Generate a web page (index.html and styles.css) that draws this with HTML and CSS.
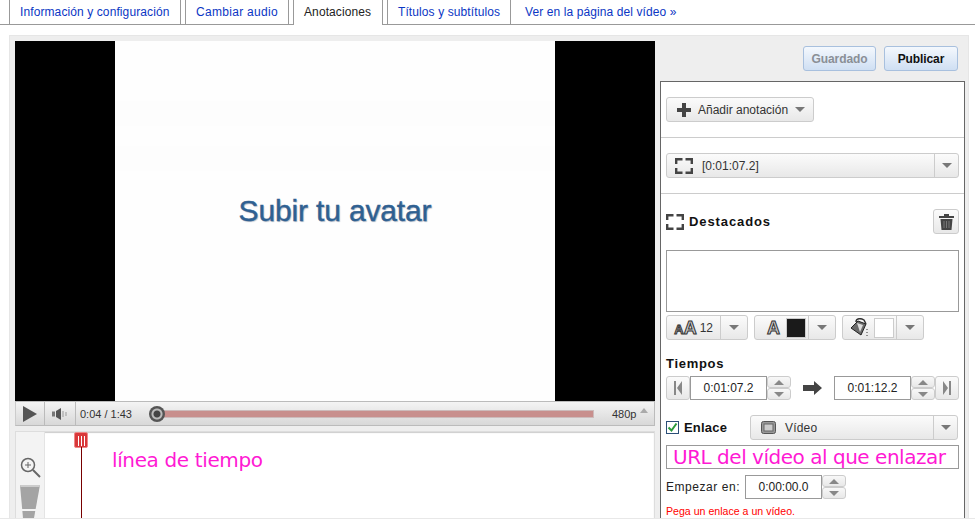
FILE: index.html
```html
<!DOCTYPE html>
<html lang="es">
<head>
<meta charset="utf-8">
<title>Anotaciones</title>
<link rel="stylesheet" href="styles.css">
</head>
<body>
<nav class="tabs">
  <a class="tab">Información y configuración</a>
  <a class="tab">Cambiar audio</a>
  <a class="tab active">Anotaciones</a>
  <a class="tab">Títulos y subtítulos</a>
  <a class="tab tab-link">Ver en la página del vídeo »</a>
</nav>
<main class="main">
  <section class="left">
    <div class="video">
      <div class="bar-black"></div>
      <div class="slide"><span class="slide-title">Subir tu avatar</span></div>
      <div class="bar-black"></div>
    </div>
    <div class="controls">
      <div class="ctl ctl-play"><svg width="14" height="16" viewBox="0 0 14 16"><path d="M0 0L14 8L0 16Z" fill="#555"/></svg></div>
      <div class="ctl ctl-vol"><svg width="16" height="12" viewBox="0 0 16 12"><path d="M0 3.5H3V8.500H0Z" fill="#777"/><path d="M4 3L9 0V12L4 9Z" fill="#555"/><path d="M11 3V9M14 4V8" stroke="#999" fill="none"/></svg></div>
      <span class="time">0:04 / 1:43</span>
      <div class="track">
        <div class="fill"></div>
        <div class="knob"></div>
      </div>
      <span class="quality">480p</span>
      <span class="q-up"></span>
    </div>
    <div class="timeline">
      <div class="zoomcol">
        <svg class="zoomicon" width="21" height="21" viewBox="0 0 21 21"><circle cx="8" cy="8" r="6.500" fill="none" stroke="#666" stroke-width="1.500"/><path d="M5 8H11M8 5V11" stroke="#666"/><path d="M13 13L20 20" stroke="#666" stroke-width="2"/></svg>
        <svg class="zoomslider" width="20" height="33" viewBox="0 0 20 33"><path d="M0 0H20L14 33H3Z" fill="#a4a4a4"/><path d="M0 0H20L19.700 2H.4Z" fill="#ccc"/><path d="M0 24H20V26H0Z" fill="#f3f3f3"/></svg>
      </div>
      <div class="tracks">
        <div class="playhead"><span class="grip"></span></div>
        <div class="playline"></div>
        <span class="tl-note">línea de tiempo</span>
      </div>
    </div>
  </section>
  <section class="right">
    <div class="actions">
      <button class="act act-off">Guardado</button>
      <button class="act">Publicar</button>
    </div>
    <div class="panel">
      <div class="sec">
        <div class="btn add">
          <svg width="14" height="14" viewBox="0 0 14 14"><path d="M5 0H9V5H14V9H9V14H5V9H0V5H5Z" fill="#444"/></svg>
          <span>Añadir anotación</span>
          <i class="caret"></i>
        </div>
      </div>
      <div class="sec">
        <div class="btn sel">
          <span class="sel-main sel-time">
            <svg class="brk" width="18" height="16" viewBox="0 0 18 16"><path d="M1.200 6V1.200H7.500M10.500 1.200H16.800V6M1.200 10V14.800H7.500M10.500 14.800H16.800V10" fill="none" stroke="#444" stroke-width="2.400"/></svg>
            <span>[0:01:07.2]</span>
          </span>
          <span class="sel-arrow"><i class="caret"></i></span>
        </div>
      </div>
      <div class="sec sec-last">
        <div class="head">
          <svg width="18" height="16" viewBox="0 0 18 16"><path d="M1.200 6V1.200H7.500M10.500 1.200H16.800V6M1.200 10V14.800H7.500M10.500 14.800H16.800V10" fill="none" stroke="#444" stroke-width="2.400"/></svg>
          <strong class="head-title">Destacados</strong>
          <div class="btn trash"><svg width="15" height="16" viewBox="0 0 15 16"><path d="M5 0H10V2H15V4H0V2H5Z" fill="#444"/><path d="M1.500 5H13.500L12.500 16H2.500Z" fill="#444"/><path d="M5 7V14M7.500 7V14M10 7V14" stroke="#777"/></svg></div>
        </div>
        <div class="textbox"></div>
        <div class="tools">
          <div class="btn tool tool-size">
            <span class="tool-main"><span class="gl gl-small">A</span><span class="gl">A</span><span class="num">12</span></span>
            <span class="tool-arrow"><i class="caret"></i></span>
          </div>
          <div class="btn tool tool-color">
            <span class="tool-main"><span class="gl">A</span><span class="swatch swatch-dark"></span></span>
            <span class="tool-arrow"><i class="caret"></i></span>
          </div>
          <div class="btn tool">
            <span class="tool-main"><svg width="18" height="19" viewBox="0 0 18 19"><path d="M7 3L15 6L10 17L0 10Z" fill="#6a6a6a" stroke="#222"/><path d="M6 5L12 7L9 14Z" fill="#ddd"/><path d="M5 4C5 0 10 0 13 2L15 6" fill="none" stroke="#333" stroke-width="1.500"/><path d="M16 11V12M16 14V15M16 17V18" stroke="#333"/></svg><span class="swatch swatch-light"></span></span>
            <span class="tool-arrow"><i class="caret"></i></span>
          </div>
        </div>
        <strong class="label">Tiempos</strong>
        <div class="times">
          <div class="btn step"><svg width="8" height="14" viewBox="0 0 8 14"><path d="M0 0H2V14H0ZM8 0V14L3 7Z" fill="#888"/></svg></div>
          <div class="timefield">0:01:07.2</div>
          <div class="spin"><span class="spin-b"><i class="up"></i></span><span class="spin-b"><i class="down"></i></span></div>
          <svg class="arrow" width="19" height="14" viewBox="0 0 19 14"><path d="M0 4H11V0L19 7L11 14V10H0Z" fill="#444"/></svg>
          <div class="timefield">0:01:12.2</div>
          <div class="spin"><span class="spin-b"><i class="up"></i></span><span class="spin-b"><i class="down"></i></span></div>
          <div class="btn step"><svg width="8" height="14" viewBox="0 0 8 14"><path d="M0 0V14L5 7ZM6 0H8V14H6Z" fill="#888"/></svg></div>
        </div>
        <div class="linkrow">
          <span class="check"><svg width="11" height="11" viewBox="0 0 11 11"><path d="M1.500 5.500L4.500 8.500L9.500 1.500" fill="none" stroke="#2a9a3a" stroke-width="2"/></svg></span>
          <strong class="link-label">Enlace</strong>
          <div class="btn sel link-sel">
            <span class="sel-main sel-video">
              <svg width="15" height="13" viewBox="0 0 15 13"><rect x=".5" y=".5" width="14" height="12" rx="2" fill="#999" stroke="#555"/><rect x="3" y="3" width="9" height="7" fill="#ccc" stroke="#666"/></svg>
              <span class="video-word">Vídeo</span>
            </span>
            <span class="sel-arrow"><i class="caret"></i></span>
          </div>
        </div>
        <div class="urlbox">URL del vídeo al que enlazar</div>
        <div class="startrow">
          <span class="start-label">Empezar en:</span>
          <div class="timefield">0:00:00.0</div>
          <div class="spin"><span class="spin-b"><i class="up"></i></span><span class="spin-b"><i class="down"></i></span></div>
        </div>
        <p class="error">Pega un enlace a un vídeo.</p>
      </div>
    </div>
  </section>
</main>
<div class="pageline"></div>
</body>
</html>
```

FILE: styles.css
```css
* { box-sizing: border-box; }
html, body { margin: 0; height: 519px; overflow: hidden; background: #fff; }
body { position: relative; font: 12px "Liberation Sans", Arial, sans-serif; color: #222; }

/* tabs */
.tabs { display: flex; gap: 4px; height: 25px; padding-left: 9px; border-bottom: 1px solid #999; }
.tab { height: 25px; padding: 5px 10px 0; border: 1px solid #999; border-top: 0; color: #0b36c4; white-space: nowrap; letter-spacing: .1px; }
.tab.active { color: #222; background: #fff; border-bottom: 0; }
.tab:nth-child(1) { width: 172px; }
.tab:nth-child(2) { width: 104px; letter-spacing: .3px; }
.tab:nth-child(3) { width: 90px; }
.tab:nth-child(4) { width: 124px; }
.tab-link { border: 0; padding-left: 10px; }

/* layout */
.main { display: flex; gap: 5px; width: 960px; height: 490px; margin: 10px 0 0 9px; padding: 5px 3px 0 5px; background: #eee; border: 1px solid #e6e6e6; border-bottom: 0; }
.left { width: 640px; flex: none; }
.right { width: 305px; flex: none; }

/* video */
.video { display: flex; height: 360px; background: #000; }
.bar-black { width: 100px; background: #000; }
.slide { flex: 1; display: flex; align-items: center; justify-content: center; padding: 0 0 20px 0; background: linear-gradient(#fefefe 0 60px, #fdfdfd 60px 85px, #fefefe 85px 105px, #fdfdfd 105px 130px, #fefefe 130px); }
.slide-title { font-size: 30px; letter-spacing: -.15px; color: #2f6091; -webkit-text-stroke: .4px #2f6091; text-shadow: 1px 1px 1px #b4bcc8; }

/* player bar */
.controls { display: flex; align-items: center; height: 25px; background: linear-gradient(#f4f4f4, #d8d8d8); border: 1px solid #bbb; border-left-color: #ccc; }
.ctl { display: flex; align-items: center; justify-content: center; height: 100%; border-right: 1px solid #bbb; }
.ctl-play { width: 29px; }
.ctl-vol { width: 31px; }
.time { width: 74px; padding-left: 4px; color: #333; font-size: 11px; white-space: nowrap; }
.track { position: relative; width: 444px; height: 8px; background: #c88f8d; border: 1px solid #cbb; }
.knob { position: absolute; left: -2px; top: -5px; width: 16px; height: 16px; border-radius: 50%; background: radial-gradient(#444 0 3px, #bbb 4px 5px, #555 6px 8px); }
.quality { margin-left: 18px; color: #333; font-size: 11px; }
.q-up { margin-left: 4px; margin-bottom: 6px; border: 4px solid transparent; border-top: 0; border-bottom: 5px solid #aaa; }

/* timeline */
.timeline { display: flex; height: 92px; margin-top: 5px; background: #fff; border: 1px solid #ddd; box-shadow: inset 0 1px 1px #ccc; }
.zoomcol { display: flex; flex-direction: column; align-items: center; gap: 7px; width: 29px; padding: 25px 0 0 0; background: #f3f3f3; border-right: 1px solid #e4e4e4; overflow: hidden; }
.zoomslider { flex: none; }
.zoomicon { flex: none; }
.tracks { position: relative; flex: 1; }
.playhead { position: absolute; left: 29px; top: 0; width: 14px; height: 16px; background: #d9383a; border: 1px solid #e88; border-radius: 2px; display: flex; justify-content: center; }
.grip { width: 7px; height: 10px; margin-top: 3px; border-left: 1px solid #fff; border-right: 1px solid #fff; background: linear-gradient(90deg, transparent 2px, #fff 2px 3px, transparent 3px); }
.playline { position: absolute; left: 36px; top: 15px; bottom: 0; width: 1px; background: #700; }
.tl-note { position: absolute; left: 67px; top: 16px; font: 20px "DejaVu Sans", sans-serif; color: #ff19d4; letter-spacing: -.37px; white-space: nowrap; }

/* right column */
.actions { display: flex; justify-content: flex-end; gap: 8px; height: 25px; margin: 5px 7px 10px 0; }
.act { width: 74px; height: 25px; padding: 0; font: bold 12px "Liberation Sans", Arial, sans-serif; letter-spacing: -.1px; color: #111; background: linear-gradient(#f4f8fd, #cfdff3); border: 1px solid #a8c0de; border-radius: 3px; }
.act-off { width: 73px; color: #8a8f96; }

.panel { height: 440px; background: #fff; border: 1px solid #666; border-bottom: 0; overflow: hidden; }
.sec { padding: 15px 5px; height: 56px; border-bottom: 1px solid #ccc; }
.sec-last { height: auto; padding-bottom: 0; border: 0; }
.btn { display: flex; align-items: center; height: 25px; background: linear-gradient(#fbfbfb, #e8e8e8); border: 1px solid #ccc; border-radius: 3px; color: #333; }
.add { width: 148px; padding-left: 10px; gap: 7px; }
.caret { display: block; width: 0; border: 5px solid transparent; border-bottom: 0; border-top: 5px solid #777; }
.sel { width: 293px; }
.sel-main { flex: 1; display: flex; align-items: center; height: 100%; }
.sel-time { padding-left: 8px; gap: 9px; }
.sel-arrow { display: flex; align-items: center; justify-content: center; width: 24px; height: 100%; border-left: 1px solid #ccc; }
.sec + .sec { height: 56px; }
.sec + .sec.sec-last { height: auto; }

.head { display: flex; align-items: center; height: 25px; }
.head-title { margin-left: 5px; font-size: 13px; letter-spacing: .9px; color: #111; }
.trash { width: 26px; margin-left: auto; justify-content: center; }
.textbox { height: 62px; margin-top: 16px; border: 1px solid #999; background: #fff; }
.tools { display: flex; gap: 6px; margin-top: 3px; }
.tool { width: 82px; }
.tool-main { flex: 1; display: flex; align-items: center; justify-content: flex-end; gap: 5px; height: 100%; padding-right: 2px; }
.tool-arrow { display: flex; align-items: center; justify-content: center; width: 27px; height: 100%; border-left: 1px solid #ccc; }
.tool-size .tool-main { gap: 0; padding-right: 7px; }
.tool-color .tool-main { gap: 6px; }
.gl { font: bold 18px/1 "Liberation Sans", Arial, sans-serif; color: #ccc; -webkit-text-stroke: 1px #333; }
.gl-small { font-size: 13px; margin-top: 3px; }
.num { margin-left: 3px; font-size: 12px; }
.swatch { display: block; width: 20px; height: 20px; border: 1px solid #ccc; }
.swatch-dark { background: #1a1a1a; }
.swatch-light { background: #fff; }

.label { display: block; margin-top: 16px; height: 20px; font-size: 13px; line-height: 16px; letter-spacing: .7px; color: #111; }
.times { display: flex; align-items: center; height: 24px; }
.step { width: 24px; height: 24px; justify-content: center; }
.timefield { width: 77px; height: 24px; text-align: center; line-height: 22px; color: #222; background: #fff; border: 1px solid #999; flex: none; }
.spin { display: flex; flex-direction: column; width: 24px; height: 24px; flex: none; }
.spin-b { flex: 1; display: flex; align-items: center; justify-content: center; background: linear-gradient(#f8f8f8, #e8e8e8); border: 1px solid #ccc; border-radius: 3px; }
.up, .down { display: block; border: 5px solid transparent; }
.up { border-top: 0; border-bottom: 5px solid #888; }
.down { border-bottom: 0; border-top: 5px solid #888; }
.arrow { flex: none; margin: 0 12px; }

.linkrow { display: flex; align-items: center; height: 25px; margin-top: 15px; }
.check { display: flex; align-items: center; justify-content: center; width: 13px; height: 13px; border: 1px solid #2b4f78; }
.link-label { margin-left: 5px; width: 66px; font-size: 13px; letter-spacing: .2px; color: #111; }
.link-sel { width: 208px; }
.sel-video { padding-left: 10px; gap: 9px; }
.video-word { letter-spacing: .2px; }
.urlbox { height: 24px; margin-top: 5px; padding-left: 6px; border: 1px solid #999; font: 20px/23px "DejaVu Sans", sans-serif; letter-spacing: -.48px; color: #ff19d4; white-space: nowrap; overflow: hidden; }
.startrow { display: flex; align-items: center; height: 24px; margin-top: 6px; color: #222; }
.start-label { width: 79px; letter-spacing: .55px; white-space: nowrap; }
.error { margin: 6px 0 0; font-size: 10.600px; line-height: 12px; color: #f00; }

.pageline { position: absolute; left: 0; right: 0; bottom: 0; height: 1px; background: #e8e8e8; }
```
